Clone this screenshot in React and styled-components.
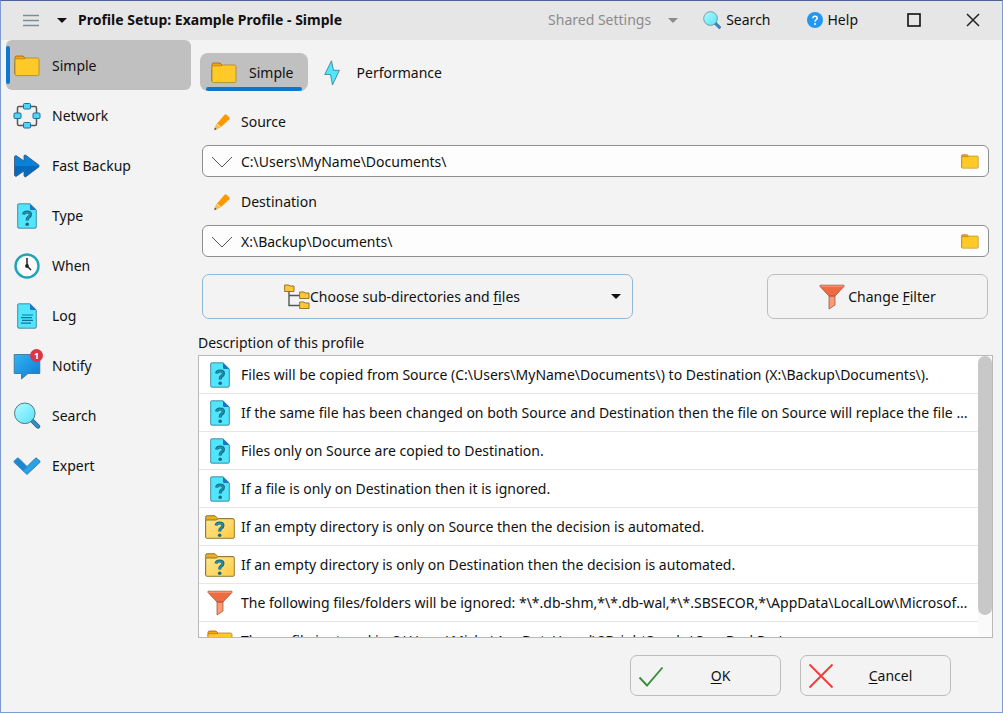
import React, { useState } from "react";
import styled, { createGlobalStyle, css } from "styled-components";

const App = () => {
  const [page, setPage] = useState("Simple");
  const [source, setSource] = useState("C:\\Users\\MyName\\Documents\\");
  const [destination, setDestination] = useState("X:\\Backup\\Documents\\");

  return (
    <Window>
      <GlobalStyle />

      <TitleBar>
        <MenuButton aria-label="Menu">
          <MenuIcon />
          <Arrow />
        </MenuButton>
        <Title>Profile Setup: Example Profile - Simple</Title>
        <TitleButton disabled $space={25}>
          Shared Settings
          <Arrow $gap={12} />
        </TitleButton>
        <TitleButton $space={36}>
          <SearchIcon size={18} />
          Search
        </TitleButton>
        <TitleButton $space={39}>
          <HelpIcon />
          Help
        </TitleButton>
        <WindowButton aria-label="Maximize">
          <svg width="14" height="14" viewBox="0 0 14 14">
            <rect x="1" y="1" width="12" height="12" fill="none" stroke="#111" strokeWidth="1.6" />
          </svg>
        </WindowButton>
        <WindowButton aria-label="Close">
          <svg width="14" height="14" viewBox="0 0 14 14">
            <path d="M1 1L13 13M13 1L1 13" stroke="#222" strokeWidth="1.5" />
          </svg>
        </WindowButton>
      </TitleBar>

      <Body>
        <Sidebar>
          {pages.map(({ name, icon: Icon }) => (
            <SideButton key={name} $active={name === page} onClick={() => setPage(name)}>
              <Icon />
              {name}
            </SideButton>
          ))}
        </Sidebar>

        <Main>
          <Tabs>
            <Tab $active>
              <FolderIcon />
              Simple
            </Tab>
            <Tab>
              <BoltIcon />
              Performance
            </Tab>
          </Tabs>

          <Form>
            <PathField id="source" label="Source" value={source} onChange={setSource} />
            <PathField
              id="destination"
              label="Destination"
              value={destination}
              onChange={setDestination}
            />

            <Actions>
              <ChooseButton>
                <ButtonContent>
                  <TreeIcon />
                  <span>
                    Choose sub-directories and <u>f</u>iles
                  </span>
                </ButtonContent>
                <Arrow $gap={10} />
              </ChooseButton>
              <FilterButton>
                <FunnelIcon />
                <span>
                  Change <u>F</u>ilter
                </span>
              </FilterButton>
            </Actions>
          </Form>

          <Heading>Description of this profile</Heading>
          <ListBox>
            <List>
              {description.map(({ icon: Icon, text }) => (
                <Row key={text}>
                  <RowIcon>
                    <Icon />
                  </RowIcon>
                  <RowText>{text}</RowText>
                </Row>
              ))}
            </List>
            <ScrollTrack>
              <ScrollThumb />
            </ScrollTrack>
          </ListBox>
        </Main>
      </Body>

      <Footer>
        <FooterButton>
          <CheckIcon />
          <span>
            <u>O</u>K
          </span>
        </FooterButton>
        <FooterButton>
          <CrossIcon />
          <span>
            <u>C</u>ancel
          </span>
        </FooterButton>
      </Footer>
    </Window>
  );
};

const PathField = ({ id, label, value, onChange }) => (
  <Field>
    <FieldLabel htmlFor={id}>
      <PencilIcon />
      {label}
    </FieldLabel>
    <PathBox>
      <IconButton aria-label={`Recent ${label}`}>
        <svg width="22" height="12" viewBox="0 0 22 12">
          <path d="M1 1L11 11L21 1" fill="none" stroke="#555" strokeWidth="1" />
        </svg>
      </IconButton>
      <PathInput id={id} value={value} onChange={e => onChange(e.target.value)} />
      <IconButton aria-label={`Browse ${label}`}>
        <FolderIcon size={18} />
      </IconButton>
    </PathBox>
  </Field>
);

// icons
const MenuIcon = () => (
  <svg width="16" height="13" viewBox="0 0 16 13">
    <path d="M0 1.5H16M0 6.5H16M0 11.5H16" stroke="#78909c" strokeWidth="1.4" />
  </svg>
);

const FolderIcon = ({ size = 26 }) => (
  <svg width={size} height={(size * 22) / 26} viewBox="0 0 26 22">
    <path d="M1 19V2.5Q1 1 2.5 1H9L11.5 3.5H23V8H1Z" fill="#ffa000" stroke="#8d6a1c" strokeWidth="0.8" />
    <path
      d="M1 4.6Q1 3.8 2 3.8H10L12 3H23.5Q25 3 25 4.5V19Q25 20.6 23.5 20.6H2.5Q1 20.6 1 19Z"
      fill="#ffca28"
      stroke="#a88425"
      strokeWidth="0.8"
    />
  </svg>
);

const NetworkIcon = () => (
  <svg width="28" height="28" viewBox="0 0 28 28">
    <path
      d="M11 4.5H6Q4.5 4.5 4.5 6V11M17 4.5H22Q23.5 4.5 23.5 6V11M4.5 17V22Q4.5 23.5 6 23.5H11M23.5 17V22Q23.5 23.5 22 23.5H17"
      fill="none"
      stroke="#555"
      strokeWidth="1.5"
    />
    <g fill="#50d6fa" stroke="#1b6f9c" strokeWidth="1">
      <rect x="10.5" y="1.5" width="7" height="5.5" rx="1" />
      <rect x="10.5" y="20.5" width="7" height="5.5" rx="1" />
      <rect x="1" y="11" width="7" height="5.5" rx="1" />
      <rect x="20" y="11" width="7" height="5.5" rx="1" />
    </g>
  </svg>
);

const FastIcon = () => (
  <svg width="28" height="24" viewBox="0 0 28 24">
    <path
      d="M1.5 2.5L3 1.5L11 7V1.5L12.5 1L26 11.2V12.8L12.5 23L11 22V17L3 22.5L1.5 21.5Z"
      fill="#0883d9"
      stroke="#37506b"
      strokeWidth="0.8"
      strokeLinejoin="round"
    />
    <path d="M2 12H25.8V12.5L12.5 22.5L11.4 21.5V16L3 22L2 21Z" fill="#0669bc" />
  </svg>
);

const Sheet = ({ children }) => (
  <svg width="20" height="26" viewBox="0 0 20 26">
    <path
      d="M1.5 0.8H13L19.3 7V24Q19.3 25.2 18 25.2H1.8Q0.7 25.2 0.7 24V1.8Q0.7 0.8 1.5 0.8Z"
      fill="#50e6ff"
      stroke="#3c8296"
      strokeWidth="0.9"
    />
    <path d="M13 0.8L19.3 7H14Q13 7 13 6Z" fill="#1e74c9" />
    {children}
  </svg>
);

const QuestionMark = () => (
  <g>
    <path
      d="M6.6 11.5Q7 9 10 9Q13.4 9 13.4 11.6Q13.4 13.2 11.6 14.2Q10.2 15 10.2 17.5"
      fill="none"
      stroke="#176b80"
      strokeWidth="3.2"
    />
    <path
      d="M6.8 11.4Q7.2 9.2 10 9.2Q13.2 9.2 13.2 11.6Q13.2 13 11.6 14Q10.2 15 10.2 17.2"
      fill="none"
      stroke="#2494ac"
      strokeWidth="1.3"
    />
    <circle cx="10.2" cy="21.2" r="1.8" fill="#176b80" />
  </g>
);

const TypeIcon = () => (
  <Sheet>
    <QuestionMark />
  </Sheet>
);

const LogIcon = () => (
  <Sheet>
    <path d="M5 12H16M4 14.7H15M5 17.4H16M4 20.1H14" stroke="#16719a" strokeWidth="1.2" />
  </Sheet>
);

const FolderQuestionIcon = () => (
  <svg width="30" height="24" viewBox="0 0 30 24">
    <defs>
      <linearGradient id="folder" x1="0" y1="0" x2="1" y2="1">
        <stop offset="0" stopColor="#ffe693" />
        <stop offset="1" stopColor="#ffcc42" />
      </linearGradient>
    </defs>
    <path d="M0.7 22V2Q0.7 0.7 2 0.7H10L13 3.7H28V9H0.7Z" fill="#e8af22" stroke="#8a6d22" strokeWidth="0.9" />
    <path
      d="M0.7 6Q0.7 5 2 5H11L13.5 3.7H28Q29.3 3.7 29.3 5V22Q29.3 23.3 28 23.3H2Q0.7 23.3 0.7 22Z"
      fill="url(#folder)"
      stroke="#8a6d22"
      strokeWidth="0.9"
    />
    <g transform="translate(4.5 -1)">
      <QuestionMark />
    </g>
  </svg>
);

const ClockIcon = () => (
  <svg width="26" height="26" viewBox="0 0 26 26">
    <circle cx="13" cy="13" r="11.5" fill="#fafafa" stroke="#1fa3b5" strokeWidth="2.4" />
    <path d="M13 5V13L17 17" fill="none" stroke="#222" strokeWidth="1.5" />
    <circle cx="13" cy="13" r="1.9" fill="#222" />
  </svg>
);

const NotifyIcon = () => (
  <NotifyMark>
    <svg width="28" height="28" viewBox="0 0 28 28">
      <defs>
        <linearGradient id="bubble" x1="0" y1="0" x2="1" y2="1">
          <stop offset="0" stopColor="#32b4f2" />
          <stop offset="1" stopColor="#0f78d4" />
        </linearGradient>
      </defs>
      <path
        d="M1.2 2.5H26.8V21.5H15L8.5 27V21.5H1.2Z"
        fill="url(#bubble)"
        stroke="#3a6a8a"
        strokeWidth="0.8"
      />
    </svg>
    <Badge>1</Badge>
  </NotifyMark>
);

const SearchIcon = ({ size = 27 }) => (
  <svg width={size} height={size} viewBox="0 0 27 27">
    <defs>
      <linearGradient id="lens" x1="0" y1="0" x2="1" y2="1">
        <stop offset="0" stopColor="#b3fbff" />
        <stop offset="1" stopColor="#58e1f8" />
      </linearGradient>
    </defs>
    <path d="M18 18L24.5 24.5" stroke="#37617d" strokeWidth="4.4" strokeLinecap="round" />
    <path d="M18.5 18.5L24.5 24.5" stroke="#2a92d0" strokeWidth="2.8" strokeLinecap="round" />
    <circle cx="11.3" cy="11.3" r="10.3" fill="url(#lens)" stroke="#4a7a88" strokeWidth="1" />
  </svg>
);

const ExpertIcon = () => (
  <svg width="28" height="18" viewBox="0 0 28 18">
    <path
      d="M1 4.3L4 1.3Q5 0.7 6 1.5L14 9.5L22 1.5Q23 0.7 24 1.3L27 4.3V5.3L14 17.5L1 5.3Z"
      fill="#2aa3e6"
      stroke="#32709b"
      strokeWidth="0.8"
    />
    <path d="M1.5 4.5L5 1.5L14 10L10.5 13.8Z" fill="#1987d6" />
  </svg>
);

const HelpIcon = () => (
  <svg width="16" height="16" viewBox="0 0 16 16">
    <circle cx="8" cy="8" r="8" fill="#2196f3" />
    <path
      d="M5.8 6.2Q5.9 4.2 8 4.2Q10.2 4.2 10.2 6.1Q10.2 7.2 9 7.9Q8 8.5 8 9.7"
      fill="none"
      stroke="#fff"
      strokeWidth="1.5"
    />
    <circle cx="8" cy="11.9" r="1" fill="#fff" />
  </svg>
);

const BoltIcon = () => (
  <svg width="16" height="26" viewBox="0 0 16 26">
    <path
      d="M7.5 0.8L0.7 14.5H6.5L8.5 25L15.4 10.3H9.5Z"
      fill="#50e6ff"
      stroke="#36788a"
      strokeWidth="0.8"
      strokeLinejoin="round"
    />
  </svg>
);

const PencilIcon = () => (
  <svg width="16" height="16" viewBox="0 0 16 16">
    <path d="M10.8 0.6Q11.6 0 12.4 0.6L15.4 3.6Q16 4.4 15.4 5.2L7 13L3 9.5Z" fill="#ff9800" />
    <path d="M2.2 9.8L6.6 13.8L0.3 16Z" fill="#f5bc45" />
    <path d="M0.9 13.6L2.7 15.2L0.2 16Z" fill="#37474f" />
  </svg>
);

const TreeIcon = () => (
  <svg width="26" height="25" viewBox="0 0 26 25">
    <path d="M5 6V21.5H16M5 11.5H16" fill="none" stroke="#555" strokeWidth="1.4" />
    <g fill="#ffc733" stroke="#8a6d22" strokeWidth="0.9">
      <path d="M0.6 1H5L6 2H10V7.5H0.6Z" />
      <path d="M15.6 8H20L21 9H25V14.5H15.6Z" />
      <path d="M15.6 18H20L21 19H25V24.5H15.6Z" />
    </g>
  </svg>
);

const FunnelIcon = () => (
  <svg width="26" height="26" viewBox="0 0 26 26">
    <path d="M10 12H16V21L10 25Z" fill="#ff9873" stroke="#8a4a35" strokeWidth="0.7" />
    <path d="M1 1.2H25V2.5L16 12H10L1 2.5Z" fill="#ef6c42" stroke="#8a4a35" strokeWidth="0.7" />
    <path d="M1.3 1.6H24.7V2.8H1.3Z" fill="#f79a7b" />
  </svg>
);

const CheckIcon = () => (
  <svg width="26" height="26" viewBox="0 0 26 26">
    <path d="M1.5 14.5L9 22.5L24.5 4.5" fill="none" stroke="#388e3c" strokeWidth="1.9" />
  </svg>
);

const CrossIcon = () => (
  <svg width="26" height="26" viewBox="0 0 26 26">
    <path d="M1.5 1.5L24.5 24.5M24.5 1.5L1.5 24.5" stroke="#f03e3a" strokeWidth="1.9" />
  </svg>
);

const pages = [
  { name: "Simple", icon: FolderIcon },
  { name: "Network", icon: NetworkIcon },
  { name: "Fast Backup", icon: FastIcon },
  { name: "Type", icon: TypeIcon },
  { name: "When", icon: ClockIcon },
  { name: "Log", icon: LogIcon },
  { name: "Notify", icon: NotifyIcon },
  { name: "Search", icon: SearchIcon },
  { name: "Expert", icon: ExpertIcon }
];

const description = [
  {
    icon: TypeIcon,
    text:
      "Files will be copied from Source (C:\\Users\\MyName\\Documents\\) to Destination (X:\\Backup\\Documents\\)."
  },
  {
    icon: TypeIcon,
    text:
      "If the same file has been changed on both Source and Destination then the file on Source will replace the file on Destination."
  },
  { icon: TypeIcon, text: "Files only on Source are copied to Destination." },
  { icon: TypeIcon, text: "If a file is only on Destination then it is ignored." },
  {
    icon: FolderQuestionIcon,
    text: "If an empty directory is only on Source then the decision is automated."
  },
  {
    icon: FolderQuestionIcon,
    text: "If an empty directory is only on Destination then the decision is automated."
  },
  {
    icon: FunnelIcon,
    text:
      "The following files/folders will be ignored: *\\*.db-shm,*\\*.db-wal,*\\*.SBSECOR,*\\AppData\\LocalLow\\Microsoft\\*"
  },
  {
    icon: FolderIcon,
    text: "The profile is stored in C:\\Users\\Micha\\AppData\\Local\\2BrightSparks\\SyncBackPro\\"
  }
];

// styled components
const GlobalStyle = createGlobalStyle`
  * {
    box-sizing: border-box;
  }

  body {
    margin: 0;
    background: #f3f3f3;
    color: #111;
    font-family: "Noto Sans", "Open Sans", sans-serif;
    font-size: 14px;
    line-height: 20px;
  }

  button {
    border: 0;
    padding: 0;
    background: none;
    color: inherit;
    font: inherit;
  }

  svg {
    display: block;
    flex: none;
  }

  u {
    text-underline-offset: 2px;
  }
`;

const Window = styled.div`
  display: flex;
  flex-direction: column;
  height: 100vh;
  border: 1px solid #7d9bd0;
  border-top-color: #4a6396;
`;

const TitleBar = styled.header`
  display: flex;
  align-items: center;
  height: 39px;
  padding: 0 12px 1px 22px;
  background: #e6e6e6;
`;

const MenuButton = styled.button`
  display: flex;
  align-items: center;
  gap: 18px;
`;

const Title = styled.h1`
  flex: 1;
  margin: 0 0 0 11px;
  font-size: 14px;
  font-weight: 700;
`;

const TitleButton = styled.button`
  display: flex;
  align-items: center;
  gap: 5px;
  margin-right: ${props => props.$space}px;

  &:disabled {
    color: #8c8c8c;
  }
`;

const WindowButton = styled.button`
  display: flex;
  justify-content: center;
  width: 34px;

  & + & {
    margin-left: 25px;
  }
`;

const Arrow = styled.span`
  flex: none;
  margin-left: ${props => props.$gap || 0}px;
  border: 5px solid transparent;
  border-top-color: currentColor;
  border-bottom: 0;
`;

const Body = styled.div`
  display: flex;
  flex: 1;
  min-height: 0;
`;

const Sidebar = styled.nav`
  width: 197px;
  padding: 0 7px 0 5px;
`;

const SideButton = styled.button`
  position: relative;
  display: flex;
  align-items: center;
  gap: 11px;
  width: 100%;
  height: 50px;
  padding: 1px 0 0 7px;
  border-radius: 6px;

  > :first-child {
    width: 28px;
  }

  ${props =>
    props.$active &&
    css`
      background: #c0c0c0;

      &::before {
        content: "";
        position: absolute;
        left: 0;
        top: 6px;
        bottom: 6px;
        width: 4px;
        border-radius: 2px;
        background: #0a78d4;
      }
    `}
`;

const NotifyMark = styled.span`
  position: relative;
`;

const Badge = styled.span`
  position: absolute;
  top: -3px;
  right: -2px;
  width: 13px;
  height: 13px;
  border-radius: 50%;
  background: #dc3545;
  color: #fff;
  font-size: 9px;
  font-weight: 700;
  line-height: 13px;
  text-align: center;
`;

const Main = styled.main`
  display: flex;
  flex: 1;
  flex-direction: column;
  min-width: 0;
  padding: 13px 9px 0 0;
`;

const Tabs = styled.div`
  display: flex;
  padding-left: 2px;
`;

const Tab = styled.button`
  position: relative;
  display: flex;
  align-items: center;
  gap: 12px;
  height: 38px;
  padding: 1px 14px 0 11px;
  border-radius: 8px;

  > :first-child {
    min-width: 26px;
  }

  ${props =>
    props.$active &&
    css`
      background: #c0c0c0;

      &::after {
        content: "";
        position: absolute;
        left: 6px;
        right: 6px;
        bottom: 0;
        height: 4px;
        border-radius: 2px;
        background: #0f76c8;
      }
    `}
`;

const Form = styled.div`
  padding: 14px 4px 0;
`;

const Field = styled.div`
  margin-bottom: 8px;
`;

const FieldLabel = styled.label`
  display: flex;
  align-items: center;
  gap: 11px;
  height: 32px;
  margin-bottom: 8px;
  padding: 1px 0 0 12px;
`;

const PathBox = styled.div`
  display: flex;
  align-items: center;
  height: 32px;
  padding: 1px 9px 0 8px;
  border: 1px solid #8f8f8f;
  border-radius: 6px;
  background: #fdfdfd;
`;

const IconButton = styled.button`
  display: flex;
  flex: none;
`;

const PathInput = styled.input`
  flex: 1;
  min-width: 0;
  margin: 0 8px;
  padding: 0;
  border: 0;
  outline: 0;
  background: none;
  color: inherit;
  font: inherit;
`;

const Actions = styled.div`
  display: grid;
  grid-template-columns: 39fr 20fr;
  gap: 134px;
  margin-top: 17px;
  padding-right: 1px;
`;

const Button = styled.button`
  display: flex;
  align-items: center;
  border: 1px solid #bdbdbd;
  border-radius: 7px;
`;

const ChooseButton = styled(Button)`
  height: 45px;
  padding-right: 11px;
  border-color: #90b8d8;
`;

const ButtonContent = styled.span`
  display: flex;
  flex: 1;
  align-items: center;
  justify-content: center;
`;

const FilterButton = styled(Button)`
  justify-content: center;
  gap: 3px;
  height: 45px;
`;

const Heading = styled.h2`
  margin: 14px 0 2px;
  font-size: 14px;
  font-weight: 400;
`;

const ListBox = styled.div`
  display: flex;
  flex: 1;
  min-height: 0;
  border: 1px solid #b9b9b9;
  background: #fff;
`;

const List = styled.ul`
  flex: 1;
  min-width: 0;
  margin: 0;
  padding: 0;
  overflow-y: auto;
  scrollbar-width: none;
  list-style: none;
`;

const ScrollTrack = styled.div`
  width: 14px;
  background: #fafafa;
`;

const ScrollThumb = styled.div`
  height: 92%;
  border-radius: 7px;
  background: #c8c8c8;
`;

const Row = styled.li`
  display: flex;
  align-items: center;
  gap: 6px;
  height: 38px;
  padding: 1px 8px 0 6px;
  border-bottom: 1px solid #e6e6e6;
`;

const RowIcon = styled.span`
  display: flex;
  flex: none;
  justify-content: center;
  width: 30px;
`;

const RowText = styled.span`
  overflow: hidden;
  text-overflow: ellipsis;
  white-space: nowrap;
`;

const Footer = styled.footer`
  display: flex;
  justify-content: flex-end;
  gap: 19px;
  padding: 17px 51px 16px;
`;

const FooterButton = styled(Button)`
  width: 151px;
  height: 41px;
  padding: 0 3px 0 7px;

  span {
    flex: 1;
  }
`;

export default App;
